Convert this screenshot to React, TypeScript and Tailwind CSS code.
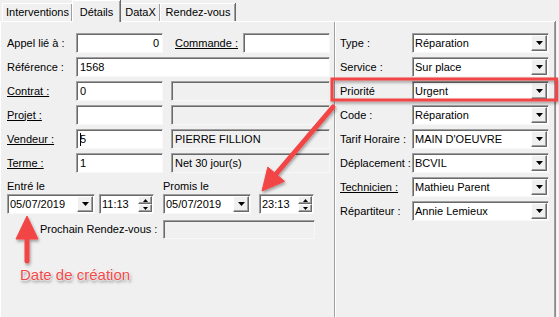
import React from 'react';

const sunken =
  'border border-t-[#a0a0a0] border-l-[#a0a0a0] border-b-[#f8f8f8] border-r-[#f8f8f8] shadow-[inset_1px_1px_0_#696969]';
const raised =
  'border border-t-white border-l-white border-b-[#696969] border-r-[#696969] bg-[#f0f0f0] shadow-[inset_-1px_-1px_0_#a0a0a0]';

function Tri({ up, small }: { up?: boolean; small?: boolean }) {
  const w = small ? 5 : 7;
  const h = small ? 3 : 4;
  return (
    <svg width={w} height={h} viewBox={`0 0 ${w} ${h}`}>
      <path d={up ? `M${w / 2} 0L${w} ${h}H0z` : `M0 0h${w}L${w / 2} ${h}z`} fill="#000" />
    </svg>
  );
}

function DropBtn() {
  return (
    <div className={`mr-px flex h-4 w-4 shrink-0 items-center justify-center ${raised}`}>
      <Tri />
    </div>
  );
}

function Spin() {
  return (
    <div className="mr-px flex h-4 w-[14px] shrink-0 flex-col">
      <div className={`flex h-2 items-center justify-center ${raised}`}>
        <Tri up small />
      </div>
      <div className={`flex h-2 items-center justify-center ${raised}`}>
        <Tri small />
      </div>
    </div>
  );
}

function Field({ w, children, right, disabled, caret }: { w: string; children?: React.ReactNode; right?: boolean; disabled?: boolean; caret?: boolean }) {
  return (
    <div className={`flex h-5 items-center ${sunken} ${w} ${disabled ? 'bg-[#f0f0f0]' : 'bg-white'} ${right ? 'justify-end pr-[3px]' : 'pl-[3px]'}`}>
      {caret && <span className="mr-[-1px] h-[13px] w-px bg-black" />}
      <span className="whitespace-nowrap">{children}</span>
    </div>
  );
}

function Combo({ w, value, spin }: { w: string; value: string; spin?: boolean }) {
  return (
    <div className={`flex h-5 items-center bg-white ${sunken} ${w}`}>
      <span className="flex-1 truncate pl-[2px]">{value}</span>
      {spin ? <Spin /> : <DropBtn />}
    </div>
  );
}

function Tab({ label, w, selected }: { label: string; w: string; selected?: boolean }) {
  if (selected) {
    return (
      <div className={`relative z-10 -mb-px flex h-[22px] items-start justify-center border-l border-t border-white bg-[#f0f0f0] pt-[3px] shadow-[inset_-1px_0_0_#a0a0a0,1px_0_0_#696969] ${w}`}>
        {label}
      </div>
    );
  }
  return (
    <div className={`flex h-[18px] items-center justify-center border-l border-t border-white bg-[#f0f0f0] shadow-[inset_-1px_0_0_#a0a0a0,1px_0_0_#696969] ${w}`}>
      {label}
    </div>
  );
}

const rightRows = [
  { label: 'Type :', value: 'Réparation' },
  { label: 'Service :', value: 'Sur place' },
  { label: 'Priorité', value: 'Urgent' },
  { label: 'Code :', value: 'Réparation' },
  { label: 'Tarif Horaire :', value: "MAIN D'OEUVRE" },
  { label: 'Déplacement :', value: 'BCVIL' },
  { label: 'Technicien :', value: 'Mathieu Parent', underline: true },
  { label: 'Répartiteur :', value: 'Annie Lemieux' },
];

export default function App() {
  return (
    <div className="relative h-[317px] w-[559px] overflow-hidden bg-[#f0f0f0] font-['Liberation_Sans',Arial,sans-serif] text-[11px] text-black">
      {/* tabs */}
      <div className="flex h-[21px] items-end pl-[2px]">
        <Tab label="Interventions" w="w-[70px]" />
        <Tab label="Détails" w="w-[48px]" selected />
        <Tab label="DataX" w="w-[40px]" />
        <Tab label="Rendez-vous" w="w-[75px]" />
      </div>

      <div className="flex h-[296px]">
        <div className="flex w-[555px] border-l border-t border-white shadow-[inset_-1px_0_0_#a0a0a0,1px_0_0_#8a8a8a]">
          {/* left panel */}
          <div className="flex w-[333px] flex-col pl-[6px] pt-[11px]">
            <div className="flex flex-col gap-1">
              <div className="flex h-5 items-center">
                <span className="w-[69px]">Appel lié à :</span>
                <Field w="w-[87px]" right>0</Field>
                <span className="ml-[12px] w-[68px] underline">Commande :</span>
                <Field w="w-[87px]" />
              </div>
              <div className="flex h-5 items-center">
                <span className="w-[69px]">Référence :</span>
                <Field w="w-[254px]">1568</Field>
              </div>
              <div className="flex h-5 items-center">
                <span className="w-[69px] underline">Contrat :</span>
                <Field w="w-[87px]">0</Field>
                <div className="ml-[8px]"><Field w="w-[159px]" disabled /></div>
              </div>
              <div className="flex h-5 items-center">
                <span className="w-[69px] underline">Projet :</span>
                <Field w="w-[87px]" />
                <div className="ml-[8px]"><Field w="w-[159px]" disabled /></div>
              </div>
              <div className="flex h-5 items-center">
                <span className="w-[69px] underline">Vendeur :</span>
                <Field w="w-[87px]" caret>5</Field>
                <div className="ml-[8px]"><Field w="w-[159px]" disabled>PIERRE FILLION</Field></div>
              </div>
              <div className="flex h-5 items-center">
                <span className="w-[69px] underline">Terme :</span>
                <Field w="w-[87px]">1</Field>
                <div className="ml-[8px]"><Field w="w-[159px]" disabled>Net 30 jour(s)</Field></div>
              </div>
            </div>

            <div className="mt-[6px] flex h-[15px] items-center">
              <span className="w-[156px]">Entré le</span>
              <span>Promis le</span>
            </div>
            <div className="flex h-5 items-center">
              <Combo w="w-[88px]" value="05/07/2019" />
              <div className="ml-[4px]"><Combo w="w-[55px]" value="11:13" spin /></div>
              <div className="ml-[9px]"><Combo w="w-[88px]" value="05/07/2019" /></div>
              <div className="ml-[8px]"><Combo w="w-[55px]" value="23:13" spin /></div>
            </div>
            <div className="mt-[6px] flex h-[19px] items-center pl-[33px]">
              <span className="w-[123px]">Prochain Rendez-vous :</span>
              <div className={`h-[19px] w-[152px] bg-[#f0f0f0] ${sunken}`} />
            </div>
          </div>

          {/* right panel */}
          <div className="flex w-[221px] flex-col border-l border-[#a0a0a0] pl-[5px] pt-[11px] shadow-[inset_1px_0_0_#fff]">
            <div className="flex flex-col gap-1">
              {rightRows.map((r) => (
                <div key={r.label} className="flex h-5 items-center">
                  <span className={`w-[72px] ${r.underline ? 'underline' : ''}`}>{r.label}</span>
                  <Combo w="w-[137px]" value={r.value} />
                </div>
              ))}
            </div>
          </div>
        </div>
        <div className="ml-[2px] w-px bg-[#fafafa]" />
      </div>

      {/* annotations */}
      <svg className="pointer-events-none absolute left-0 top-0" width="559" height="317" viewBox="0 0 559 317">
        <defs>
          <filter id="sh" x="-20%" y="-20%" width="140%" height="140%">
            <feDropShadow dx="1" dy="2" stdDeviation="1.5" floodColor="#000" floodOpacity="0.35" />
          </filter>
        </defs>
        <g filter="url(#sh)" fill="#f24545" stroke="#f24545">
          <rect x="332" y="79" width="224.5" height="21" fill="none" strokeWidth="3" />
          <line x1="333" y1="107" x2="276" y2="174" strokeWidth="5" strokeLinecap="round" />
          <path d="M262 191L284.6 181.3L267.8 167.1z" strokeWidth="1" strokeLinejoin="round" />
          <line x1="27" y1="236" x2="27" y2="261" strokeWidth="5" strokeLinecap="round" />
          <path d="M27 216L38 239H16z" strokeWidth="1" strokeLinejoin="round" />
        </g>
      </svg>
      <div className="pointer-events-none absolute left-[20px] top-[264px] text-[15px] text-[#f04848] [text-shadow:0_0_2px_#fff,0_0_2px_#fff,0_0_2px_#fff,1px_2px_3px_rgba(0,0,0,0.55)]">
        Date de création
      </div>
    </div>
  );
}
